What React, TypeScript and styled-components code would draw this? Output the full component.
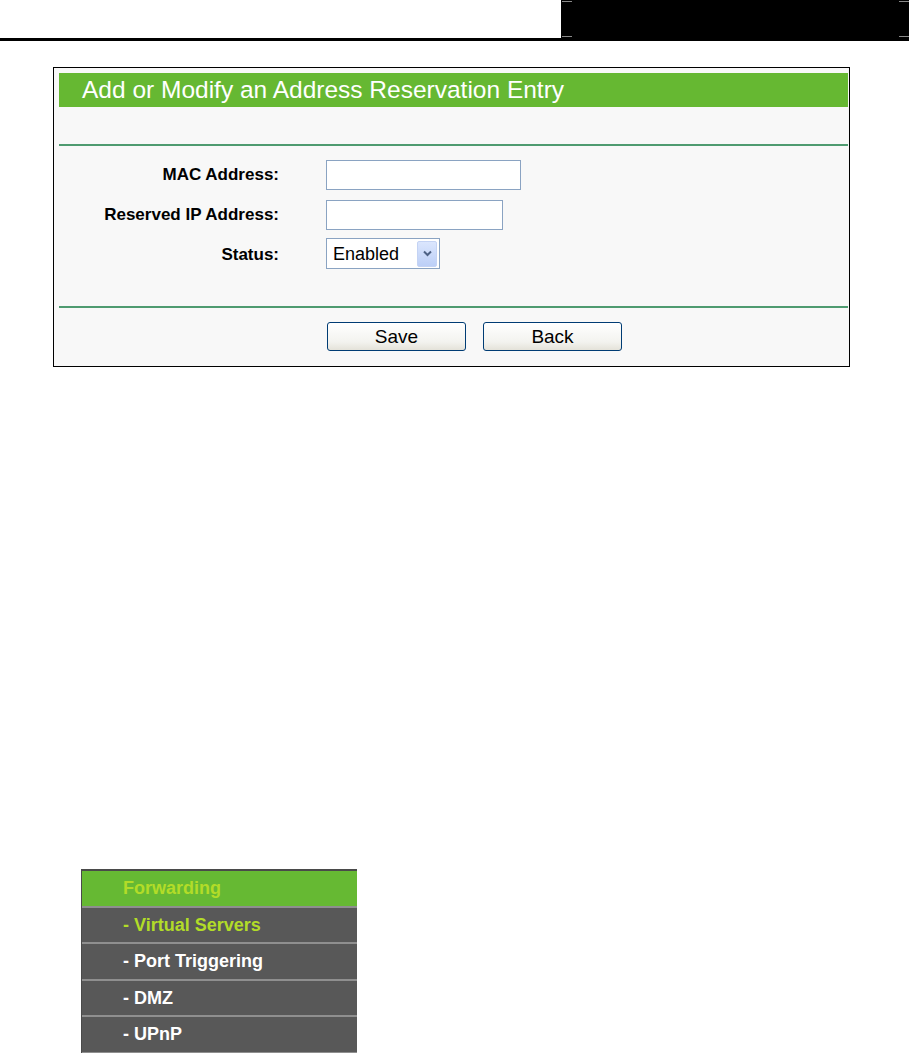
import styled, { createGlobalStyle } from 'styled-components'

const GlobalStyle = createGlobalStyle`
  html, body {
    margin: 0;
    padding: 0;
    background: #fff;
  }
  body {
    font-family: 'Liberation Sans', Arial, sans-serif;
  }
`

const MENU_ITEMS = [
  { label: 'Forwarding', kind: 'head' },
  { label: '- Virtual Servers', kind: 'active' },
  { label: '- Port Triggering', kind: 'plain' },
  { label: '- DMZ', kind: 'plain' },
  { label: '- UPnP', kind: 'plain' },
] as const

type MenuKind = typeof MENU_ITEMS[number]['kind']

const App = () => {
  return (
    <Page>
      <GlobalStyle />
      <TopBar>
        <HeaderBlock />
      </TopBar>

      <Panel>
        <PanelTitle>Add or Modify an Address Reservation Entry</PanelTitle>
        <TitleGap />
        <Divider />
        <Form>
          <Label htmlFor="mac">MAC Address:</Label>
          <TextInput id="mac" $width={195} />
          <Label htmlFor="ip">Reserved IP Address:</Label>
          <TextInput id="ip" $width={177} />
          <Label htmlFor="status">Status:</Label>
          <SelectBox>
            <Select id="status" defaultValue="enabled">
              <option value="enabled">Enabled</option>
              <option value="disabled">Disabled</option>
            </Select>
            <SelectArrow>
              <svg width="9" height="7" viewBox="0 0 9 7">
                <path
                  d="M1 1.5 L4.5 5 L8 1.5"
                  fill="none"
                  stroke="#4d6185"
                  strokeWidth="2"
                />
              </svg>
            </SelectArrow>
          </SelectBox>
        </Form>
        <Divider />
        <ButtonRow>
          <Button type="button">Save</Button>
          <Button type="button">Back</Button>
        </ButtonRow>
      </Panel>

      <Menu>
        {MENU_ITEMS.map((item) => (
          <MenuItem key={item.label} $kind={item.kind}>
            {item.label}
          </MenuItem>
        ))}
      </Menu>
    </Page>
  )
}

export default App

const Page = styled.div`
  width: 909px;
  height: 1053px;
  overflow: hidden;
  display: flex;
  flex-direction: column;
`

const TopBar = styled.div`
  height: 38px;
  display: flex;
  justify-content: flex-end;
  border-bottom: 3px solid #000;
`

// small grey crop marks sit on the corners of the black block
const HeaderBlock = styled.div`
  position: relative;
  width: 348px;
  height: 38px;
  background: #000;

  &::before,
  &::after {
    content: '';
    position: absolute;
    left: 1px;
    width: 10px;
    height: 1px;
    background: #8a8a8a;
    box-shadow: 337px 0 #8a8a8a;
  }
  &::before {
    top: 1px;
  }
  &::after {
    bottom: 1px;
  }
`

const Panel = styled.div`
  margin: 26px 0 0 53px;
  width: 797px;
  box-sizing: border-box;
  border: 1px solid #000;
  background: #f8f8f8;
  padding: 5px 1px 1px 5px;
  display: flex;
  flex-direction: column;
`

const PanelTitle = styled.div`
  height: 34px;
  line-height: 34px;
  padding-left: 23px;
  background: #66b832;
  color: #fff;
  font-size: 24.5px;
`

const TitleGap = styled.div`
  height: 37px;
`

const Divider = styled.div`
  height: 2px;
  background: #4f9b70;
`

const Form = styled.div`
  display: grid;
  grid-template-columns: 220px auto;
  grid-auto-rows: 40px;
  column-gap: 47px;
  align-items: start;
  justify-items: start;
  padding: 14px 0 26px;
`

const Label = styled.label`
  justify-self: end;
  height: 30px;
  line-height: 30px;
  font-size: 17px;
  font-weight: bold;
  color: #000;
`

const TextInput = styled.input<{ $width: number }>`
  width: ${({ $width }) => $width}px;
  height: 30px;
  box-sizing: border-box;
  margin: 0;
  border: 1px solid #8aa3c2;
  background: #fff;
  font-size: 17px;
  font-family: 'Liberation Sans', Arial, sans-serif;
  outline: none;
`

const SelectBox = styled.div`
  display: flex;
  align-items: center;
  width: 114px;
  height: 31px;
  margin-top: -2px;
  box-sizing: border-box;
  border: 1px solid #8aa3c2;
  background: #fff;
  padding-right: 2px;
`

const Select = styled.select`
  flex: 1;
  min-width: 0;
  height: 100%;
  appearance: none;
  border: none;
  background: transparent;
  padding: 0 0 0 6px;
  margin: 0;
  font-size: 18px;
  font-family: 'Liberation Sans', Arial, sans-serif;
  color: #000;
  outline: none;
`

const SelectArrow = styled.span`
  width: 20px;
  height: 26px;
  display: flex;
  align-items: center;
  justify-content: center;
  border-radius: 2px;
  background: linear-gradient(#dbe6fd, #bccff7);
  border: 1px solid #c4d3f4;
  box-sizing: border-box;
`

const ButtonRow = styled.div`
  display: flex;
  gap: 17px;
  padding: 14px 0 14px 268px;
`

const Button = styled.button`
  width: 139px;
  height: 29px;
  margin: 0;
  padding: 0;
  box-sizing: border-box;
  border: 1px solid #003c74;
  border-radius: 3px;
  background: linear-gradient(#ffffff, #f3f3ef 70%, #e4e2d9);
  font-family: 'Liberation Sans', Arial, sans-serif;
  font-size: 19px;
  color: #000;
`

const Menu = styled.div`
  margin: 502px 0 0 81px;
  width: 275px;
  border-top: 2px solid #4a4a4a;
  border-left: 1px solid #4a4a4a;
  display: flex;
  flex-direction: column;
`

const MENU_BG: Record<MenuKind, string> = {
  head: '#66b933',
  active: '#585858',
  plain: '#585858',
}

const MENU_FG: Record<MenuKind, string> = {
  head: '#b2dc28',
  active: '#b2dc28',
  plain: '#fff',
}

const MenuItem = styled.div<{ $kind: MenuKind }>`
  height: 34.5px;
  line-height: 35px;
  padding-left: 41px;
  border-bottom: 2px solid #8f8f8f;
  background: ${({ $kind }) => MENU_BG[$kind]};
  color: ${({ $kind }) => MENU_FG[$kind]};
  font-size: 18px;
  font-weight: bold;
`
